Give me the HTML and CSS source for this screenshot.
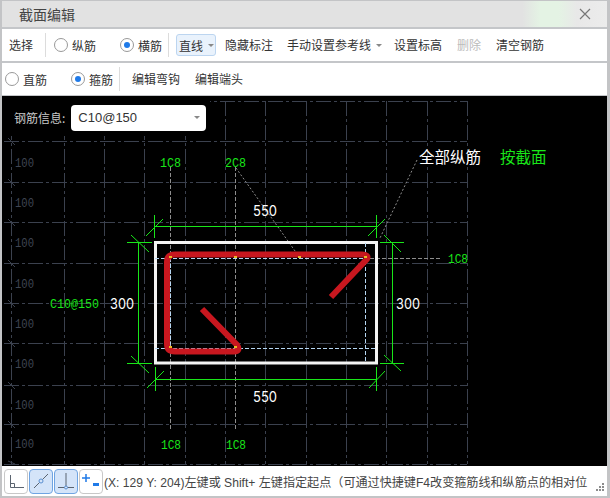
FILE: index.html
```html
<!DOCTYPE html>
<html lang="zh-CN">
<head>
    <meta charset="UTF-8">
    <title>截面编辑</title>
    <link rel="stylesheet" href="styles.css">
</head>
<body>
<div class="window">
    <div class="title-bar">
        <span>截面编辑</span>
        <svg class="close" width="12" height="12" viewBox="0 0 12 12"><path d="M1 1L11 11M11 1L1 11"/></svg>
    </div>

    <div class="tool-row first">
        <span class="item">选择</span>
        <i class="sep sep-a"></i>
        <label class="radio r-a"><i class="dot"></i>纵筋</label>
        <label class="radio r-b"><i class="dot on"></i>横筋</label>
        <i class="sep sep-b"></i>
        <div class="drop">直线<i class="caret"></i></div>
        <span class="item i-a">隐藏标注</span>
        <span class="item i-b">手动设置参考线<i class="caret"></i></span>
        <span class="item i-c">设置标高</span>
        <span class="item i-d disabled">删除</span>
        <span class="item i-d">清空钢筋</span>
    </div>

    <div class="tool-row second">
        <label class="radio r-c"><i class="dot"></i>直筋</label>
        <label class="radio r-d"><i class="dot on"></i>箍筋</label>
        <i class="sep sep-c"></i>
        <span class="item i-e">编辑弯钩</span>
        <span class="item i-f">编辑端头</span>
    </div>

    <div class="canvas">
        <svg class="drawing" width="606" height="370" viewBox="2 96 606 370">
            <!-- grid -->
            <path class="grid" d="M4 101H467M4 141H467M4 182H467M4 222H467M4 263H467M4 303H467M4 343H467M4 385H467M4 424H467M4 464H467"/>
            <path class="grid" d="M11 101V464M64 101V464M104 101V464M144 101V464M185 101V464M225 101V464M265 101V464M306 101V464M346 101V464M386 101V464M427 101V464M467 101V464"/>
            <path class="tick" d="M8 138L15 145M8 179L15 186M8 219L15 226M8 260L15 267M8 300L15 307M8 340L15 347M8 382L15 389M8 421L15 428M8 461L15 464"/>
            <g class="grid-text">
                <text x="15" y="167" textLength="19" lengthAdjust="spacingAndGlyphs">100</text>
                <text x="15" y="207" textLength="19" lengthAdjust="spacingAndGlyphs">100</text>
                <text x="15" y="247" textLength="19" lengthAdjust="spacingAndGlyphs">100</text>
                <text x="15" y="288" textLength="19" lengthAdjust="spacingAndGlyphs">100</text>
                <text x="15" y="328" textLength="19" lengthAdjust="spacingAndGlyphs">100</text>
                <text x="15" y="368" textLength="19" lengthAdjust="spacingAndGlyphs">100</text>
                <text x="15" y="409" textLength="19" lengthAdjust="spacingAndGlyphs">100</text>
                <text x="15" y="448" textLength="19" lengthAdjust="spacingAndGlyphs">100</text>
            </g>

            <!-- leaders -->
            <path class="leader" d="M170.500 167V430M235.500 167V430M370 258H440"/>
            <path class="leader dotted" d="M236 168L300 258M417 160L380 238"/>

            <!-- section outline -->
            <rect class="outline" x="155.500" y="242.500" width="221" height="120.500"/>
            <path class="guide" d="M155 258H370M155 348H375M170.500 258V348M365.500 243V363"/>

            <!-- stirrup -->
            <path class="bar" d="M202 309L237 345Q241 351 234 351.500H175Q167 351.500 167 344V262Q167 254.500 175 254.500H362Q369 254.500 367 259L331 297"/>
            <path class="node" d="M169 257h3M234 257h3M298 257h3M364 257h3M169 347h3M234 347h3"/>

            <!-- dimensions -->
            <path class="dim" d="M155 226.500H376M154.500 215V238M376.500 215V238M146 236L163 219M368 236L385 219"/>
            <path class="dim" d="M155 379.500H376M155.500 367V391M376.500 367V391M147 388L164 371M369 388L385 371"/>
            <path class="dim" d="M138.500 242V363M127 242.500H152M127 363.500H152M131 235L149 252M131 356L149 373"/>
            <path class="dim" d="M392.500 242V363M380 242.500H404M380 363.500H404M384 235L401 252M384 355L401 371"/>

            <g class="green-text">
                <text x="160" y="167" textLength="21" lengthAdjust="spacingAndGlyphs">1C8</text>
                <text x="225" y="167" textLength="21" lengthAdjust="spacingAndGlyphs">2C8</text>
                <text x="448" y="263" textLength="20" lengthAdjust="spacingAndGlyphs">1C8</text>
                <text x="50" y="308" textLength="49" lengthAdjust="spacingAndGlyphs">C10@150</text>
                <text x="161" y="449" textLength="20" lengthAdjust="spacingAndGlyphs">1C8</text>
                <text x="226" y="449" textLength="20" lengthAdjust="spacingAndGlyphs">1C8</text>
            </g>
            <g class="white-text">
                <text x="253" y="216" textLength="24" lengthAdjust="spacingAndGlyphs">550</text>
                <text x="110" y="309" textLength="24" lengthAdjust="spacingAndGlyphs">300</text>
                <text x="396" y="309" textLength="24" lengthAdjust="spacingAndGlyphs">300</text>
                <text x="253" y="402" textLength="24" lengthAdjust="spacingAndGlyphs">550</text>
            </g>
            <text class="cjk white" x="419" y="163">全部纵筋</text>
            <text class="cjk lime" x="500" y="163">按截面</text>
        </svg>

        <div class="info-panel">
            <span class="info-label">钢筋信息:</span>
            <div class="combo">C10@150<i class="caret"></i></div>
        </div>
    </div>

    <div class="status">
        <div class="snap">
            <svg width="22" height="24" viewBox="0 0 22 24"><path d="M5.500 6V18.500H19M5.500 14.500H9.500V18.500"/></svg>
        </div>
        <div class="snap active">
            <svg width="22" height="24" viewBox="0 0 22 24"><path d="M4 19L18 5"/><circle cx="11" cy="12" r="2"/></svg>
        </div>
        <div class="snap active">
            <svg width="22" height="24" viewBox="0 0 22 24"><path d="M11 4V18M3 18.500H19"/><circle cx="11" cy="18.500" r="1.500"/></svg>
        </div>
        <div class="snap">
            <svg width="22" height="24" viewBox="0 0 22 24"><path class="blue" d="M6 5V13M2 9H10"/><rect x="13" y="14" width="6" height="3"/></svg>
        </div>
        <div class="status-text">(X: 129 Y: 204)左键或 Shift+ 左键指定起点（可通过快捷键F4改变箍筋线和纵筋点的相对位</div>
        <svg class="grip" width="10" height="10" viewBox="0 0 10 10"><path d="M7 1h2v2h-2zM4 4h2v2h-2zM7 4h2v2h-2zM1 7h2v2h-2zM4 7h2v2h-2zM7 7h2v2h-2z"/></svg>
    </div>
</div>
</body>
</html>
```

FILE: styles.css
```css
* {
    box-sizing: border-box;
}

html, body {
    margin: 0;
    padding: 0;
}

body {
    width: 610px;
    height: 498px;
    overflow: hidden;
    font-family: "Noto Sans CJK SC", "Liberation Sans", sans-serif;
    font-size: 12px;
    color: #333;
}

.window {
    display: flex;
    flex-direction: column;
    height: 498px;
    border: 2px solid #c3c4c6;
    border-right-width: 3px;
    border-top-width: 1px;
    background: #fff;
}

.title-bar {
    display: flex;
    align-items: center;
    justify-content: space-between;
    height: 26px;
    padding: 0 16px 0 17px;
    font-size: 14px;
    color: #444;
    background: linear-gradient(90deg, #e2e2e2 0, #e2e2e2 86%, #e4f3e4 89%, #e4f3e4 92%, #e8e8e8 95%, #ececec 100%);
}

.close path {
    fill: none;
    stroke: #777;
    stroke-width: 1.200;
}

.tool-row {
    display: flex;
    align-items: center;
    height: 34px;
    border-top: 2px solid #c4c6c9;
    background: #fff;
}

.first {
    padding-left: 7px;
}

.second {
    height: 35px;
    padding-left: 3px;
    border-bottom: 1px solid #c4c6c9;
}

.item {
    display: flex;
    align-items: center;
    white-space: nowrap;
    line-height: 18px;
}

.disabled {
    color: #bbb;
}

.sep {
    width: 1px;
    height: 24px;
    background: #dcdcdc;
}

.sep-a {
    margin-left: 12px;
}

.sep-b {
    margin-left: 6px;
}

.sep-c {
    margin-left: 6px;
}

.radio {
    display: flex;
    align-items: center;
    white-space: nowrap;
}

.r-a {
    margin-left: 8px;
}

.r-b {
    margin-left: 24px;
}

.r-d {
    margin-left: 24px;
}

.dot {
    position: relative;
    width: 14px;
    height: 14px;
    margin-right: 4px;
    border: 1px solid #999;
    border-radius: 50%;
    background: #fff;
}

.dot.on::after {
    content: "";
    position: absolute;
    left: 3px;
    top: 3px;
    width: 6px;
    height: 6px;
    border-radius: 50%;
    background: #1f7ae8;
}

.caret {
    display: inline-block;
    width: 0;
    height: 0;
    margin-left: 5px;
    border-left: 3px solid transparent;
    border-right: 3px solid transparent;
    border-top: 3px solid #888;
}

.drop {
    display: flex;
    align-items: center;
    width: 40px;
    height: 22px;
    margin-left: 7px;
    padding-left: 2px;
    border: 1px solid #bcd5f0;
    border-radius: 3px;
    background: #e9f2fc;
}

.i-a {
    margin-left: 9px;
}

.i-b {
    margin-left: 14px;
}

.i-b .caret {
    margin-left: 5px;
}

.i-c {
    margin-left: 12px;
}

.i-d {
    margin-left: 15px;
}

.i-e {
    margin-left: 12px;
}

.i-f {
    margin-left: 15px;
}

.canvas {
    position: relative;
    flex: 1;
    background: #000;
    overflow: hidden;
}

.drawing {
    display: block;
}

.grid {
    fill: none;
    stroke: #3b414e;
    stroke-width: 1;
    stroke-dasharray: 15 3 3 3;
    shape-rendering: crispEdges;
}

.tick {
    stroke: #3b414e;
    stroke-width: 1;
}

.grid-text text {
    font-family: "Liberation Mono", monospace;
    font-size: 13px;
    fill: #3f4552;
}

.leader {
    fill: none;
    stroke: #8d8d8d;
    stroke-dasharray: 4 2;
    shape-rendering: crispEdges;
}

.dotted {
    stroke-dasharray: 2 2;
    shape-rendering: auto;
}

.outline {
    fill: none;
    stroke: #f4f4f4;
    stroke-width: 3;
}

.guide {
    fill: none;
    stroke: #b5d6f2;
    stroke-dasharray: 4 2;
    shape-rendering: crispEdges;
}

.bar {
    fill: none;
    stroke: #c8171f;
    stroke-width: 6;
}

.node {
    fill: none;
    stroke: #e8b923;
    stroke-width: 2;
}

.dim {
    fill: none;
    stroke: #19e619;
    stroke-width: 1;
}

.green-text text {
    font-family: "Liberation Mono", monospace;
    font-size: 13px;
    fill: #19e619;
}

.white-text text {
    font-family: Inter, "Liberation Sans", sans-serif;
    font-size: 15px;
    font-weight: 400;
    fill: #fff;
}

.cjk {
    font-family: "Noto Sans CJK SC", sans-serif;
    font-size: 15.500px;
}

.white {
    fill: #fff;
}

.lime {
    fill: #19e619;
}

.info-panel {
    position: absolute;
    left: 1px;
    top: 0;
    display: flex;
    align-items: center;
    width: 207px;
    height: 40px;
    padding: 3px 0 0 11px;
    background: #000;
}

.info-label {
    color: #c9c9c9;
}

.combo {
    display: flex;
    align-items: center;
    justify-content: space-between;
    width: 135px;
    height: 26px;
    margin-left: 6px;
    padding: 0 6px 0 7px;
    border-radius: 4px;
    background: #fff;
    font-family: "Liberation Sans", sans-serif;
    font-size: 13px;
}

.status {
    display: flex;
    align-items: center;
    height: 30px;
    padding-left: 2px;
    background: #fff;
}

.snap {
    display: flex;
    align-items: center;
    justify-content: center;
    width: 24px;
    height: 25px;
    margin-right: 1px;
    border: 1px solid #c8c8c8;
    border-radius: 4px;
    background: #fff;
}

.snap.active {
    border-color: #6fa4e2;
    background: #d4e4f9;
}

.snap svg path {
    fill: none;
    stroke: #5b6470;
    stroke-width: 1;
}

.snap svg path.blue {
    stroke: #1f7ae8;
    stroke-width: 1.500;
}

.snap svg rect {
    fill: #1f7ae8;
}

.snap svg circle {
    fill: #d4e4f9;
    stroke: #5b8fd0;
}

.status-text {
    flex: 1;
    min-width: 0;
    white-space: nowrap;
    font-family: "Liberation Sans", "Noto Sans CJK SC", sans-serif;
    font-size: 12.100px;
    color: #444;
}

.grip {
    margin: 12px 2px 0 8px;
}

.grip path {
    fill: #8c8c8c;
}
```
